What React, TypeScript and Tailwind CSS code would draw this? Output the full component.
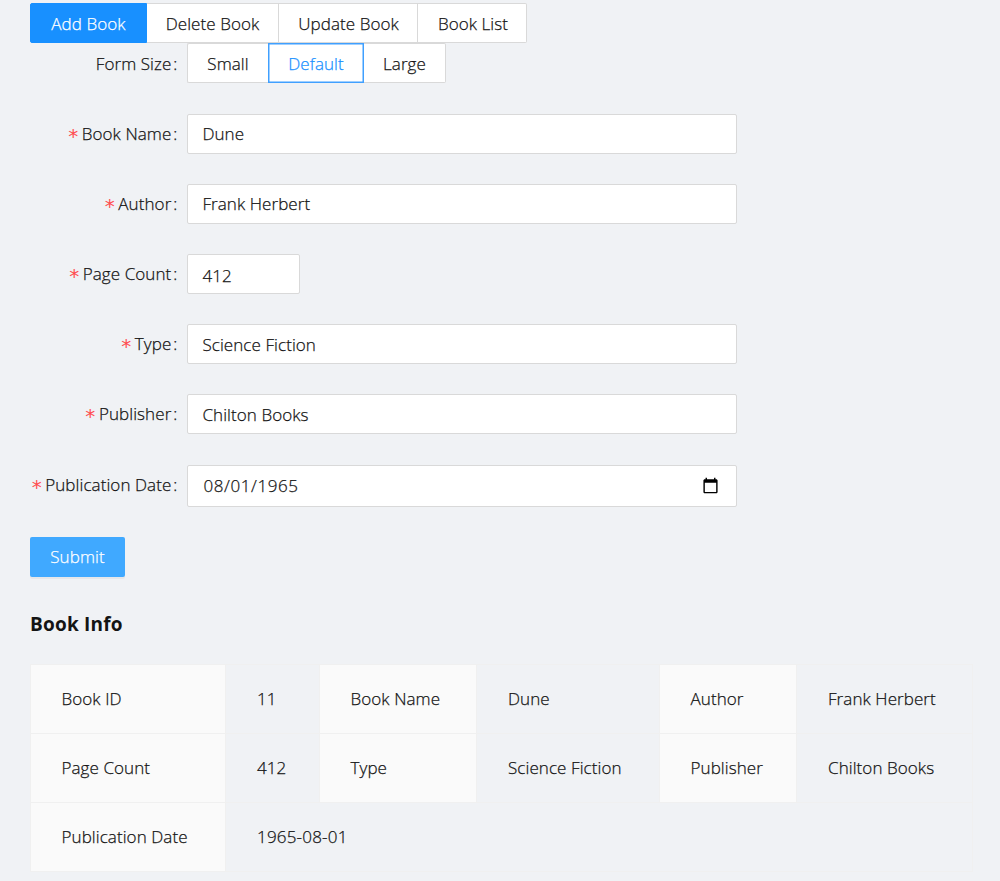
import React from "react";

const actions = [
  { label: "Add Book", cls: "w-[117px] rounded-l-xs border-[#1890ff] bg-[#1890ff] text-white" },
  { label: "Delete Book", cls: "w-[132px] border-[#d9d9d9] border-l-0 bg-white" },
  { label: "Update Book", cls: "w-[139px] border-[#d9d9d9] border-l-0 bg-white pl-px" },
  { label: "Book List", cls: "w-[109px] rounded-r-xs border-[#d9d9d9] border-l-0 bg-white pl-[2px]" },
];

const sizes = [
  { label: "Small", cls: "w-[81px] rounded-l-xs border-[#d9d9d9] border-r-0 bg-white" },
  { label: "Default", cls: "w-[96px] border-[#40a0ff] bg-white text-[#1890ff] shadow-[inset_0_0_0_0.5px_#40a0ff]" },
  { label: "Large", cls: "w-[82px] rounded-r-xs border-[#d9d9d9] border-l-0 bg-white" },
];

function Label({ text, required = true }: { text: string; required?: boolean }) {
  return (
    <div className="flex h-10 w-[148px] shrink-0 items-center justify-end pr-[0.5px] pb-px whitespace-nowrap">
      {required && (
        <span className="mr-[3.5px] pt-[6px] font-['DejaVu_Sans',sans-serif] text-[20px] font-normal text-[#ff4d4f] [-webkit-text-stroke:0]">*</span>
      )}
      <span>{text}</span>
      <span className="ml-[2px]">:</span>
    </div>
  );
}

const field =
  "block rounded-xs border border-[#d9d9d9] bg-white px-[14.4px] outline-none";

function CalendarIcon() {
  return (
    <svg className="h-[17px] w-[17px]" viewBox="0 0 24 24" fill="#000">
      <path d="M20 3h-1V1h-2v2H7V1H5v2H4c-1.1 0-2 .9-2 2v16c0 1.1.9 2 2 2h16c1.1 0 2-.9 2-2V5c0-1.1-.9-2-2-2zm0 18H4V8h16v13z" />
    </svg>
  );
}

function Row({ label, children }: { label: string; children: React.ReactNode }) {
  return (
    <div className="flex items-start gap-[9px]">
      <Label text={label} />
      {children}
    </div>
  );
}

const th = "h-[69px] border border-[#f0f0f0] bg-[#fafafa] pb-[2px] pl-[30.5px] text-left font-light";
const td = "h-[69px] border border-[#f0f0f0] pb-[2px] pl-[31px] text-left";

export default function App() {
  return (
    <div className="h-[881px] w-[1000px] overflow-hidden bg-[#f0f2f5] pt-[3px] pl-[30px] font-['Open_Sans','Noto_Sans',sans-serif] text-[17px] leading-[27px] font-light tracking-[0.08px] text-[#141414] [-webkit-text-stroke:0.25px]">
      <div className="flex">
        {actions.map((a) => (
          <button key={a.label} className={"flex h-10 items-center justify-center border pt-px whitespace-nowrap " + a.cls}>
            {a.label}
          </button>
        ))}
      </div>

      <div className="flex gap-[9px]">
        <div className="pt-px">
          <Label text="Form Size" required={false} />
        </div>
        <div className="flex">
          {sizes.map((s) => (
            <button key={s.label} className={"flex h-10 items-center justify-center border pt-px " + s.cls}>
              {s.label}
            </button>
          ))}
        </div>
      </div>

      <form className="mt-[30px] flex flex-col gap-[30.12px]">
        <Row label="Book Name">
          <input className={field + " h-10 w-[550px] pb-[2px]"} defaultValue="Dune" />
        </Row>
        <Row label="Author">
          <input className={field + " h-10 w-[550px] pb-[2px]"} defaultValue="Frank Herbert" />
        </Row>
        <Row label="Page Count">
          <input className={field + " h-10 w-[112.5px] pt-[3px]"} defaultValue="412" />
        </Row>
        <Row label="Type">
          <input className={field + " h-10 w-[550px]"} defaultValue="Science Fiction" />
        </Row>
        <Row label="Publisher">
          <input className={field + " h-10 w-[550px]"} defaultValue="Chilton Books" />
        </Row>
        <Row label="Publication Date">
          <div className={field + " h-[42px] w-[550px]"}>
            <div className="flex h-full items-center justify-between pr-[2.6px] pl-px">
              <span className="tracking-[0.6px]">08/01/1965</span>
              <CalendarIcon />
            </div>
          </div>
        </Row>
        <button
          type="button"
          className="flex h-10 w-[95px] items-center justify-center rounded-xs bg-[#40a9ff] text-white shadow-[0_2px_0_rgba(0,0,0,0.045)]"
        >
          Submit
        </button>
      </form>

      <h2 className="mt-[34.4px] text-[19px] leading-[27px] font-bold tracking-[0.2px] [-webkit-text-stroke:0]">Book Info</h2>

      <table className="mt-[26px] w-[942px] table-fixed border-collapse">
        <colgroup>
          <col className="w-[195px]" />
          <col className="w-[94px]" />
          <col className="w-[157px]" />
          <col className="w-[183px]" />
          <col className="w-[137px]" />
          <col className="w-[176px]" />
        </colgroup>
        <tbody>
          <tr>
            <th className={th}>Book ID</th>
            <td className={td}>11</td>
            <th className={th}>Book Name</th>
            <td className={td}>Dune</td>
            <th className={th}>Author</th>
            <td className={td}>Frank Herbert</td>
          </tr>
          <tr>
            <th className={th}>Page Count</th>
            <td className={td}>412</td>
            <th className={th}>Type</th>
            <td className={td}>Science Fiction</td>
            <th className={th}>Publisher</th>
            <td className={td}>Chilton Books</td>
          </tr>
          <tr>
            <th className={th}>Publication Date</th>
            <td className={td + " tracking-[0.2px]"} colSpan={5}>1965-08-01</td>
          </tr>
        </tbody>
      </table>
    </div>
  );
}
